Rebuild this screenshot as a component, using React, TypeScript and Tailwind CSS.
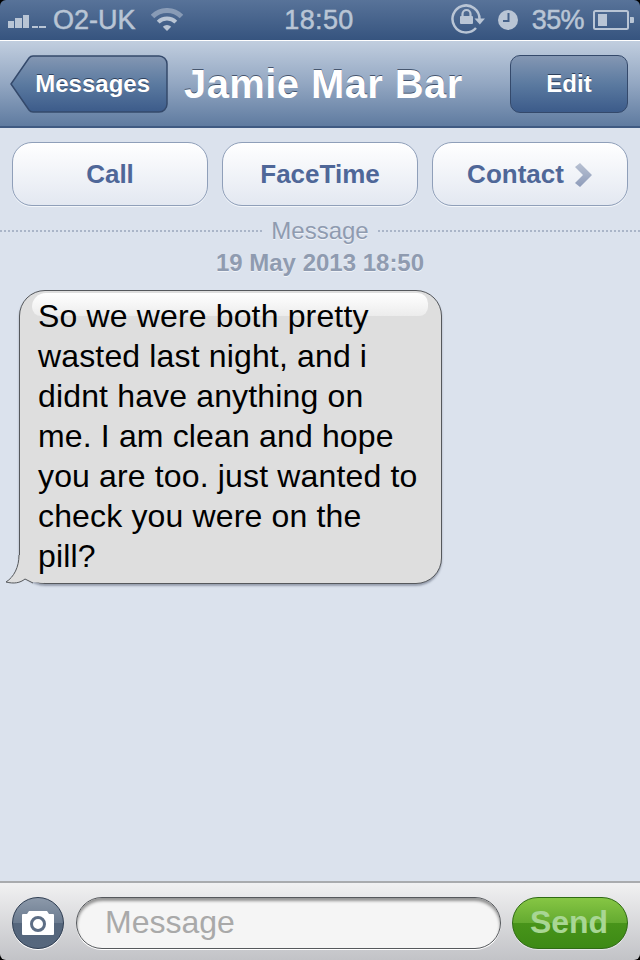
const font = "font-['Liberation_Sans',Arial,sans-serif]";
const statusText = 'text-[27px] leading-none [-webkit-text-stroke:0.5px_#b9c5d5]';

function StatusBar() {
  return (
    <div className="flex h-10 items-center rounded-t-[6px] bg-gradient-to-b from-[#587399] to-[#36547f] pl-2 pr-[6px] text-[#b9c5d5]">
      <div className="flex flex-1 items-center">
        <svg width="40" height="16" viewBox="0 0 40 16" className="fill-current">
          <rect x="0" y="9" width="6" height="7" />
          <rect x="7" y="6" width="7" height="10" />
          <rect x="15" y="3" width="6" height="13" />
          <rect x="24" y="14" width="6" height="2" />
          <rect x="31" y="14" width="7" height="2" />
        </svg>
        <span className={`ml-[5px] ${statusText}`}>O2-UK</span>
        <svg width="32" height="24" viewBox="0 0 32 24" className="ml-[15px] mt-[-1px] fill-none stroke-current">
          <path d="M1.500 8.500a20.500 20.500 0 0 1 29 0" strokeWidth="5" opacity="0.55" />
          <path d="M7.200 14.200a12.500 12.500 0 0 1 17.600 0" strokeWidth="4" />
          <path d="M16 23l-4.200-4.200a6 6 0 0 1 8.400 0z" className="fill-current stroke-none" />
        </svg>
      </div>
      <span className={`mr-[4px] tracking-[0.4px] ${statusText}`}>18:50</span>
      <div className="flex flex-1 items-center justify-end">
        <svg width="36" height="32" viewBox="0 0 36 32" className="mt-[-2px] fill-none stroke-current">
          <path d="M26 25A13.500 13.500 0 1 1 29.500 16" strokeWidth="2.500" />
          <path d="M24.500 15.500H35l-5.200 6z" className="fill-current stroke-none" />
          <path d="M12.500 13V11a4 4 0 0 1 8 0v2" strokeWidth="2.200" />
          <rect x="10" y="13" width="13" height="8" rx="1" className="fill-current stroke-none" />
        </svg>
        <svg width="20" height="20" viewBox="0 0 20 20" className="ml-[12px]">
          <circle cx="10" cy="10" r="10" className="fill-current" />
          <path d="M10.500 3V11H5" fill="none" stroke="#46628a" strokeWidth="2" />
        </svg>
        <span className={`ml-[14px] tracking-[-0.6px] ${statusText}`}>35%</span>
        <svg width="41" height="20" viewBox="0 0 41 20" className="ml-[9px] fill-none stroke-current">
          <rect x="1" y="1" width="34" height="18" rx="1.500" strokeWidth="2" />
          <rect x="5" y="4" width="9" height="12" className="fill-current stroke-none" />
          <path d="M37 7h3a1 1 0 0 1 1 1v4a1 1 0 0 1-1 1h-3z" className="fill-current stroke-none" />
        </svg>
      </div>
    </div>
  );
}

function NavBar() {
  return (
    <div className="flex h-[88px] items-center border-t border-b-2 border-t-white border-b-[#3f5a82] bg-gradient-to-b from-[#c1cedf] via-[#93a7c2] to-[#5f7ba0] pl-[10px] pr-[12px]">
      <div className="relative flex h-[58px] w-[158px] items-center justify-end pr-[18px]">
        <svg width="158" height="58" viewBox="0 0 158 58" className="absolute inset-0">
          <defs>
            <linearGradient id="backFill" x1="0" y1="0" x2="0" y2="1">
              <stop offset="0" stopColor="#8497b3" />
              <stop offset="0.5" stopColor="#5b7aa0" />
              <stop offset="1" stopColor="#3c5b8a" />
            </linearGradient>
          </defs>
          <path
            d="M23 1H149a8 8 0 0 1 8 8V49a8 8 0 0 1-8 8H23a5 5 0 0 1-4-2L1 29 19 3a5 5 0 0 1 4-2z"
            fill="url(#backFill)"
            stroke="#34496b"
            strokeWidth="1.500"
          />
        </svg>
        <span className="relative text-[24px] font-bold leading-none text-white [text-shadow:0_-1px_0_rgba(20,35,60,0.7)]">
          Messages
        </span>
      </div>
      <h1 className="ml-[16px] flex-1 text-[40px] font-bold leading-none tracking-[0.4px] text-white [text-shadow:0_-1px_0_rgba(30,45,70,0.7)]">
        Jamie Mar Bar
      </h1>
      <div className="flex h-[58px] w-[118px] items-center justify-center rounded-[10px] border-[1.5px] border-[#34496b] bg-gradient-to-b from-[#8497b3] via-[#5b7aa0] to-[#3c5b8a] text-[24px] font-bold leading-none text-white [text-shadow:0_-1px_0_rgba(20,35,60,0.7)]">
        Edit
      </div>
    </div>
  );
}

function ActionButton({ label, chevron }: { label: string; chevron?: boolean }) {
  return (
    <div className="flex h-16 flex-1 items-center justify-center rounded-[20px] border border-[#8f9fb9] bg-gradient-to-b from-white to-[#e3e8f1] text-[26px] font-bold leading-none text-[#4f6798] shadow-[0_1px_0_#f3f6fa]">
      {label}
      {chevron && (
        <svg width="18" height="24" viewBox="0 0 18 24" className="ml-[11px] mt-[2px]">
          <defs>
            <linearGradient id="chevronFill" x1="0" y1="0" x2="0" y2="1">
              <stop offset="0" stopColor="#b8c1d2" />
              <stop offset="1" stopColor="#8e9cba" />
            </linearGradient>
          </defs>
          <path d="M0 4l5-4 12 12-12 12-5-4 8-8z" fill="url(#chevronFill)" />
        </svg>
      )}
    </div>
  );
}

function Divider() {
  return (
    <div className="mt-[11px] flex items-center gap-[9px]">
      <div className="flex-1 border-t-2 border-dotted border-[#aab5c8]" />
      <span className="text-[24px] leading-[28px] text-[#8f9bb0] [text-shadow:0_1px_0_#f0f3f8]">Message</span>
      <div className="flex-1 border-t-2 border-dotted border-[#aab5c8]" />
    </div>
  );
}

function Bubble() {
  return (
    <div className="relative ml-[19px] mt-[13px] w-[423px] rounded-[26px] border border-[#55585c] bg-[#dedede] pb-[7px] pl-[18px] pr-[16px] pt-[5px] text-[32px] leading-[40px] tracking-[0.15px] text-black shadow-[0_2px_2px_rgba(70,80,100,0.45)]">
      <div className="absolute left-[12px] right-[13px] top-[2px] h-[23px] rounded-b-[14px] rounded-tl-[22px] rounded-tr-[16px] bg-gradient-to-b from-white to-[#ececec]" />
      <svg width="38" height="30" viewBox="0 0 38 30" className="absolute bottom-[-2px] left-[-14px]">
        <path d="M13 0C13 12 8 22 0 27c8 2 14 1 19-3l6 3 13 1V0z" fill="#dedede" />
        <path d="M13 0C13 12 8 22 0 27c8 2 14 1 19-3l8 4" fill="none" stroke="#55585c" strokeWidth="1" />
      </svg>
      <p className="relative">
        So we were both pretty wasted last night, and i didnt have anything on me. I am clean and hope you are too.
        just wanted to check you were on the pill?
      </p>
    </div>
  );
}

function InputBar() {
  return (
    <div className="flex h-[79px] items-start gap-[12px] rounded-b-[6px] border-t-2 border-[#a9abae] bg-gradient-to-b from-[#f1f1f2] to-[#c2c3c7] pl-[12px] pr-[12px] pt-[14px]">
      <div className="flex h-[52px] w-[52px] items-center justify-center rounded-full border border-[#2e3d52] bg-[linear-gradient(to_bottom,#8c99aa,#6b7b8f_50%,#55667c_50%,#56677d)] shadow-[0_1px_0_#fff]">
        <svg width="32" height="26" viewBox="0 0 32 26">
          <path d="M1 4h4l2-3h18l2 3h4a1 1 0 0 1 1 1v19a1 1 0 0 1-1 1H1a1 1 0 0 1-1-1V5a1 1 0 0 1 1-1z" fill="#fff" />
          <circle cx="16" cy="14" r="6.500" fill="none" stroke="#5d6e85" strokeWidth="3" />
        </svg>
      </div>
      <div className="flex h-[52px] w-[425px] flex-none items-center rounded-[26px] border border-[#55585c] bg-[#f5f5f5] pb-[2px] pl-[28px] text-[32px] leading-none text-[#a9a9a9] shadow-[inset_0_3px_3px_rgba(0,0,0,0.4),0_1px_0_#fff]">
        Message
      </div>
      <div className="ml-[-1px] flex h-[52px] w-[116px] flex-none items-center justify-center rounded-[26px] border border-[#2f6b14] bg-[linear-gradient(to_bottom,#86c644,#64aa30_50%,#48941a_50%,#3d8a15)] pb-[2px] pr-[2px] text-[32px] font-bold leading-none text-[#a8d694] shadow-[0_1px_0_#e6e6e8]">
        Send
      </div>
    </div>
  );
}

export default function App() {
  return (
    <div className={`flex h-[960px] w-[640px] flex-col overflow-hidden bg-black ${font}`}>
      <StatusBar />
      <NavBar />
      <div className="flex min-h-0 flex-1 flex-col bg-[#dbe2ed]">
        <div className="mt-[14px] flex gap-[14px] px-[12px]">
          <ActionButton label="Call" />
          <ActionButton label="FaceTime" />
          <ActionButton label="Contact" chevron />
        </div>
        <Divider />
        <div className="mt-[4px] text-center text-[24px] font-bold leading-[28px] text-[#8f9bb0] [text-shadow:0_1px_0_#f0f3f8]">
          19 May 2013 18:50
        </div>
        <Bubble />
      </div>
      <InputBar />
    </div>
  );
}
